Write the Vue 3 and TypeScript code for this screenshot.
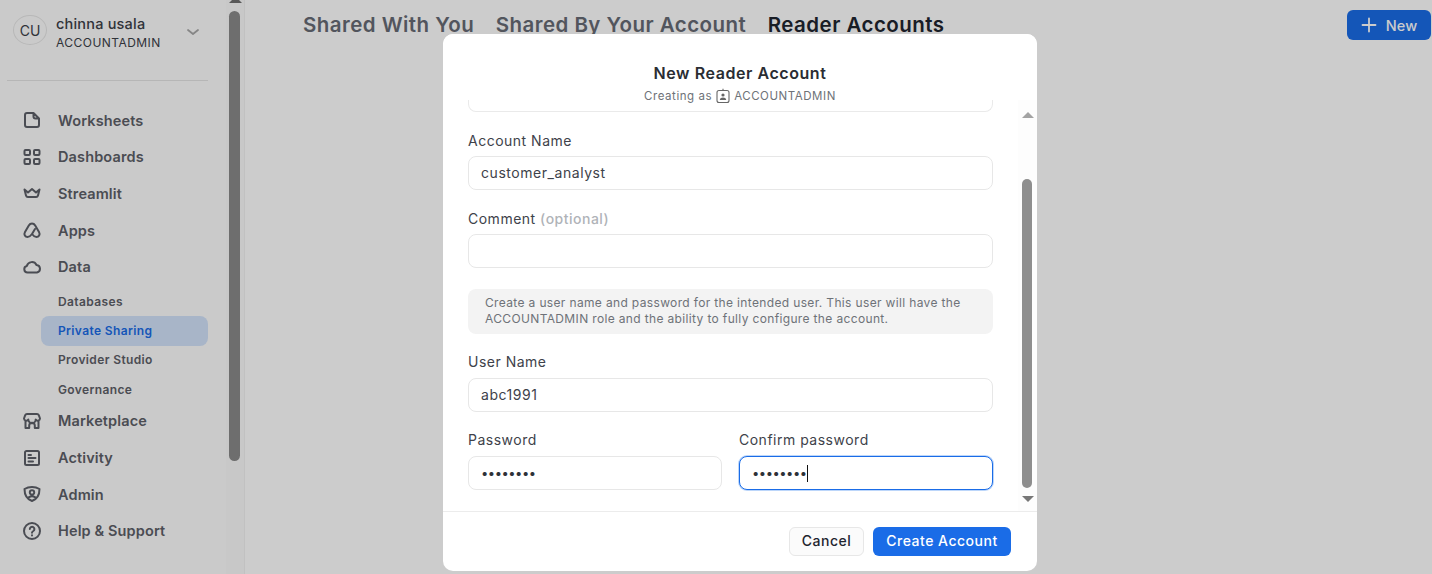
<script setup lang="ts">
interface NavItem { label: string; icon: string; active?: boolean }
const top: NavItem[] = [
  { label: 'Worksheets', icon: 'sheet' },
  { label: 'Dashboards', icon: 'grid' },
  { label: 'Streamlit', icon: 'crown' },
  { label: 'Apps', icon: 'apps' },
  { label: 'Data', icon: 'cloud' },
]
const subs: NavItem[] = [
  { label: 'Databases', icon: '' },
  { label: 'Private Sharing', icon: '', active: true },
  { label: 'Provider Studio', icon: '' },
  { label: 'Governance', icon: '' },
]
const bottom: NavItem[] = [
  { label: 'Marketplace', icon: 'store' },
  { label: 'Activity', icon: 'activity' },
  { label: 'Admin', icon: 'admin' },
  { label: 'Help & Support', icon: 'help' },
]
const paths: Record<string, string> = {
  sheet: 'M5 3h6.500L17 8.500V15a2 2 0 0 1-2 2H5a2 2 0 0 1-2-2V5a2 2 0 0 1 2-2zM11.500 3v3.500a2 2 0 0 0 2 2H17',
  grid: 'M3.500 3h3.500a1 1 0 0 1 1 1v3a1 1 0 0 1-1 1H3.500a1 1 0 0 1-1-1V4a1 1 0 0 1 1-1zM13 3h3.500a1 1 0 0 1 1 1v3a1 1 0 0 1-1 1H13a1 1 0 0 1-1-1V4a1 1 0 0 1 1-1zM3.500 12h3.500a1 1 0 0 1 1 1v3a1 1 0 0 1-1 1H3.500a1 1 0 0 1-1-1v-3a1 1 0 0 1 1-1zM13 12h3.500a1 1 0 0 1 1 1v3a1 1 0 0 1-1 1H13a1 1 0 0 1-1-1v-3a1 1 0 0 1 1-1z',
  crown: 'M2.500 6.500 6 9.500 10 6l4 3.500 3.500-3L16 12.500a2 2 0 0 1-2 1.500H6a2 2 0 0 1-2-1.500z',
  apps: 'M10 3.500C8.500 3.500 7.500 4.300 6.800 5.500L3 12C1.500 14.600 3.200 17 5.600 17 7.300 17 8.500 16 10 14c1.500 2 2.700 3 4.400 3 2.400 0 4.100-2.400 2.600-5l-3.800-6.500C12.500 4.300 11.500 3.500 10 3.500zM10 14l3-5',
  cloud: 'M5.500 15.500a3.300 3.300 0 0 1-.7-6.500A5.200 5.200 0 0 1 14.500 8a3.800 3.800 0 0 1 .5 7.500z',
  store: 'M5 3h10a2 2 0 0 1 1.800 1.200L18 7.500a2.300 2.300 0 0 1-4.300 1 3.200 3.200 0 0 1-7.400 0A2.300 2.300 0 0 1 2 7.500l1.200-3.300A2 2 0 0 1 5 3zM3.500 10v7h3.700v-2.500a2.800 2.800 0 0 1 5.600 0V17h3.700v-7',
  activity: 'M4.500 3h11A1.500 1.500 0 0 1 17 4.500v11a1.500 1.500 0 0 1-1.500 1.500h-11A1.500 1.500 0 0 1 3 15.500v-11A1.500 1.500 0 0 1 4.500 3zM6.500 7h2.500M6.500 10h7M6.500 13.500h4.500',
  admin: 'M10 3c3 0 5.500.8 7.500 2 0 5-2 10-7.500 12C4.500 15 2.500 10 2.500 5c2-1.200 4.500-2 7.500-2zM12.200 8.500a2.200 2.200 0 1 1-4.400 0 2.200 2.200 0 0 1 4.400 0zM6 14.500c.7-1.500 2.200-2.300 4-2.300s3.300.8 4 2.300',
  help: 'M10 2a8 8 0 1 1 0 16 8 8 0 0 1 0-16zM7.800 8a2.300 2.300 0 1 1 3.500 2c-.9.500-1.300 1-1.300 1.800M10 14.300v.200',
}
</script>

<template>
  <div class="page">
    <aside class="sidebar">
      <div class="user">
        <div class="avatar">CU</div>
        <div class="who">
          <div class="name">chinna usala</div>
          <div class="role">ACCOUNTADMIN</div>
        </div>
        <svg class="chev" width="14" height="14" viewBox="0 0 14 14" fill="none"><path d="M2 5l5 4 5-4" stroke="#a8a8a8" stroke-width="1.800" stroke-linecap="round" stroke-linejoin="round" /></svg>
      </div>
      <div class="rule"></div>
      <nav class="nav">
        <a v-for="i in top" :key="i.label" class="item">
          <svg width="20" height="20" viewBox="0 0 20 20" fill="none"><path :d="paths[i.icon]" stroke="#5d6068" stroke-width="2" stroke-linecap="round" stroke-linejoin="round" /></svg>
          <span>{{ i.label }}</span>
        </a>
        <div class="subs">
          <a v-for="s in subs" :key="s.label" class="sub" :class="{ active: s.active }">{{ s.label }}</a>
        </div>
        <a v-for="i in bottom" :key="i.label" class="item">
          <svg width="20" height="20" viewBox="0 0 20 20" fill="none"><path :d="paths[i.icon]" stroke="#5d6068" stroke-width="2" stroke-linecap="round" stroke-linejoin="round" /></svg>
          <span>{{ i.label }}</span>
        </a>
      </nav>
    </aside>
    <div class="side-scroll">
      <svg class="side-arrow" width="13" height="3" viewBox="0 0 13 3"><path d="M3 0h7l3 3H0z" fill="#6e6e6e" /></svg>
      <div class="side-thumb"></div>
    </div>
    <main class="main">
      <div class="tabs">
        <span class="tab">Shared With You</span>
        <span class="tab">Shared By Your Account</span>
        <span class="tab current">Reader Accounts</span>
      </div>
      <button class="new">
        <svg width="16" height="16" viewBox="0 0 16 16" fill="none"><path d="M8 1.500v13M1.500 8h13" stroke="#fff" stroke-width="1.800" stroke-linecap="round" /></svg>
        New
      </button>
    </main>

    <div class="overlay"></div>

    <section class="modal">
      <header class="head">
        <h2>New Reader Account</h2>
        <p>
          Creating as
          <svg width="14" height="16" viewBox="0 0 14 16" fill="none"><rect x="1" y="2.500" width="12" height="12" rx="2" stroke="#666" stroke-width="1.100" /><path d="M7 .8v1.700" stroke="#666" stroke-width="1.100" /><circle cx="7" cy="7" r="1.600" fill="#666" /><path d="M3.800 12c.3-1.800 1.600-2.500 3.200-2.500s2.900.7 3.200 2.500z" fill="#666" /></svg>
          ACCOUNTADMIN
        </p>
      </header>
      <div class="body">
        <div class="form">
          <div class="clipped"></div>
          <label class="field first">
            <span class="lab">Account Name</span>
            <input class="inp" type="text" value="customer_analyst" readonly />
          </label>
          <label class="field second">
            <span class="lab">Comment <em>(optional)</em></span>
            <input class="inp" type="text" readonly />
          </label>
          <div class="note">Create a user name and password for the intended user. This user will have the ACCOUNTADMIN role and the ability to fully configure the account.</div>
          <label class="field third">
            <span class="lab roomy">User Name</span>
            <input class="inp" type="text" value="abc1991" readonly />
          </label>
          <div class="pair">
            <label class="field">
              <span class="lab roomy">Password</span>
              <div class="inp dots">••••••••</div>
            </label>
            <label class="field">
              <span class="lab roomy">Confirm password</span>
              <div class="inp dots focus">••••••••<i class="caret"></i></div>
            </label>
          </div>
        </div>
        <div class="bar">
          <svg class="arrow" width="12" height="6" viewBox="0 0 12 6"><path d="M0 6l6-6 6 6z" fill="#a3a3a3" /></svg>
          <div class="bar-track"><div class="bar-thumb"></div></div>
          <svg class="arrow" width="12" height="6" viewBox="0 0 12 6"><path d="M0 0l6 6 6-6z" fill="#777" /></svg>
        </div>
      </div>
      <footer class="foot">
        <button class="cancel">Cancel</button>
        <button class="create">Create Account</button>
      </footer>
    </section>
  </div>
</template>

<style>
html, body { margin: 0; background: #fff; overflow: hidden; }
</style>

<style scoped>
* { box-sizing: border-box; }
.page {
  position: relative;
  display: flex;
  width: 1432px;
  height: 574px;
  overflow: hidden;
  font-family: Inter, "Liberation Sans", sans-serif;
  color: #1e252f;
  background: #fff;
}
.sidebar { width: 226px; flex: none; background: #fdfdfd; }
.user { display: flex; align-items: flex-start; height: 81px; padding: 15px 0 0 13px; position: relative; }
.avatar {
  width: 34px; height: 30px; border-radius: 50%;
  border: 1px solid #e6e6e6;
  display: flex; align-items: center; justify-content: center;
  font-size: 14px; color: #3c4048;
  margin-right: 9px;
}
.who { flex: 1; }
.name { font-size: 14.500px; font-weight: 500; color: #3c4048; line-height: 17px; letter-spacing: .2px; }
.role { font-size: 12px; font-weight: 400; color: #3c4048; line-height: 17px; margin-top: 2px; letter-spacing: .45px; }
.chev { margin: 10px 26px 0 0; }
.rule { height: 1px; width: 201px; background: #e4e4e4; margin: -1px 0 0 7px; }
.nav { display: flex; flex-direction: column; padding-top: 21px; }
.item {
  display: flex; align-items: center; height: 36.600px; padding-left: 22px; gap: 16px;
  font-size: 14.500px; font-weight: 600; color: #5d6068; letter-spacing: .13px;
}
.subs { display: flex; flex-direction: column; padding: 0 18px 0 41px; margin-top: 2px; margin-bottom: -1.500px; }
.sub {
  height: 29.300px; display: flex; align-items: center; padding: 0 0 1px 17px;
  font-size: 12px; font-weight: 600; color: #5d6068; letter-spacing: .37px; border-radius: 8px;
}
.sub.active { background: #d3e3fb; color: #1a6ce7; }
.side-scroll { width: 19px; flex: none; background: #fafafa; border-right: 1px solid #f2f2f2; padding: 0 3px 0; }
.side-arrow { display: block; margin-bottom: 8px; }
.side-thumb { width: 11px; height: 450px; background: #8a8a8a; border-radius: 5.500px; }
.main { flex: 1; display: flex; align-items: flex-start; justify-content: space-between; padding: 10px 0 0 58px; }
.tabs { display: flex; gap: 21.500px; }
.tab { font-size: 20.500px; font-weight: 600; color: #676b75; line-height: 30px; letter-spacing: .46px; }
.tab.current { color: #1e252f; }
.new {
  width: 84px; height: 30px; margin-right: 1px; border: 0; border-radius: 6px;
  background: #1a6ce7; color: #fff; font: 500 14.500px Inter, sans-serif; letter-spacing: .1px;
  display: flex; align-items: center; justify-content: center; gap: 9px; padding: 0;
}
.overlay { position: absolute; inset: 0; background: rgba(0, 0, 0, .2); }
.modal {
  position: absolute; left: 443px; top: 34px; width: 594px; height: 537px;
  background: #fff; border-radius: 10px;
  display: flex; flex-direction: column; overflow: hidden;
}
.head { height: 66px; flex: none; text-align: center; padding-top: 30px; background: #fff; }
.head h2 { margin: 0; font-size: 16px; line-height: 18px; font-weight: 600; color: #2a2d33; letter-spacing: .56px; }
.head p {
  margin: 6px 0 0; font-size: 11.500px; line-height: 16px; color: #6e7278; letter-spacing: .55px;
  display: flex; align-items: center; justify-content: center; gap: 4px;
}
.body { flex: 1; display: flex; min-height: 0; overflow: hidden; }
.form { flex: 1; padding: 0 25px; min-width: 0; }
.clipped { height: 12px; border: 1px solid #eaeaea; border-top: 0; border-radius: 0 0 8px 8px; }
.field { display: flex; flex-direction: column; }
.first { margin-top: 19px; }
.second { margin-top: 19px; }
.third { margin-top: 18px; }
.lab { font-size: 14px; line-height: 20px; color: #3e424a; margin-bottom: 5px; letter-spacing: .5px; }
.lab.roomy { margin-bottom: 6px; }
.lab em { font-style: normal; font-weight: 500; color: #b0b3b8; }
.inp {
  height: 34px; width: 100%; border: 1px solid #e7e7e7; border-radius: 8px;
  padding: 0 12px 2px; font: 400 14px Inter, sans-serif; color: #3e424a; letter-spacing: .55px;
  outline: none; background: #fff; display: flex; align-items: center;
}
.note {
  margin-top: 21px; height: 45px; background: #f3f3f3; border-radius: 8px;
  padding: 6px 17px; font-size: 12px; line-height: 15.500px; color: #6e7278; letter-spacing: .35px;
}
.pair { display: grid; grid-template-columns: 1fr 1fr; gap: 17px; margin-top: 18px; }
.dots { font-size: 13px; color: #2d3138; letter-spacing: -.5px; padding-bottom: 0; }
.focus { border-color: #1a6ce7; box-shadow: 0 0 0 1px #bcd6fa; }
.caret { display: inline-block; width: 1.500px; height: 17px; background: #111; margin-left: 0; }
.bar { width: 19px; flex: none; display: flex; flex-direction: column; align-items: center; padding: 12px 0 9px; background: #fdfdfd; }
.bar-track { flex: 1; width: 100%; display: flex; flex-direction: column; justify-content: flex-end; padding: 4px 0 8px; }
.bar-thumb { width: 10px; height: 309px; margin-left: 4px; background: #8e8e8e; border-radius: 5px; }
.foot {
  height: 60px; flex: none; border-top: 1px solid #ececec;
  display: flex; justify-content: flex-end; align-items: flex-start; gap: 9px; padding: 15px 26px 0 0;
}
.foot button { height: 29px; border-radius: 6px; font: 500 14px Inter, sans-serif; letter-spacing: .5px; padding: 0 0 3px; }
.cancel { width: 75px; background: #fbfbfb; border: 1px solid #e7e7e7; color: #1e252f; }
.create { width: 138px; background: #1a6ce7; border: 0; color: #fff; }
</style>
